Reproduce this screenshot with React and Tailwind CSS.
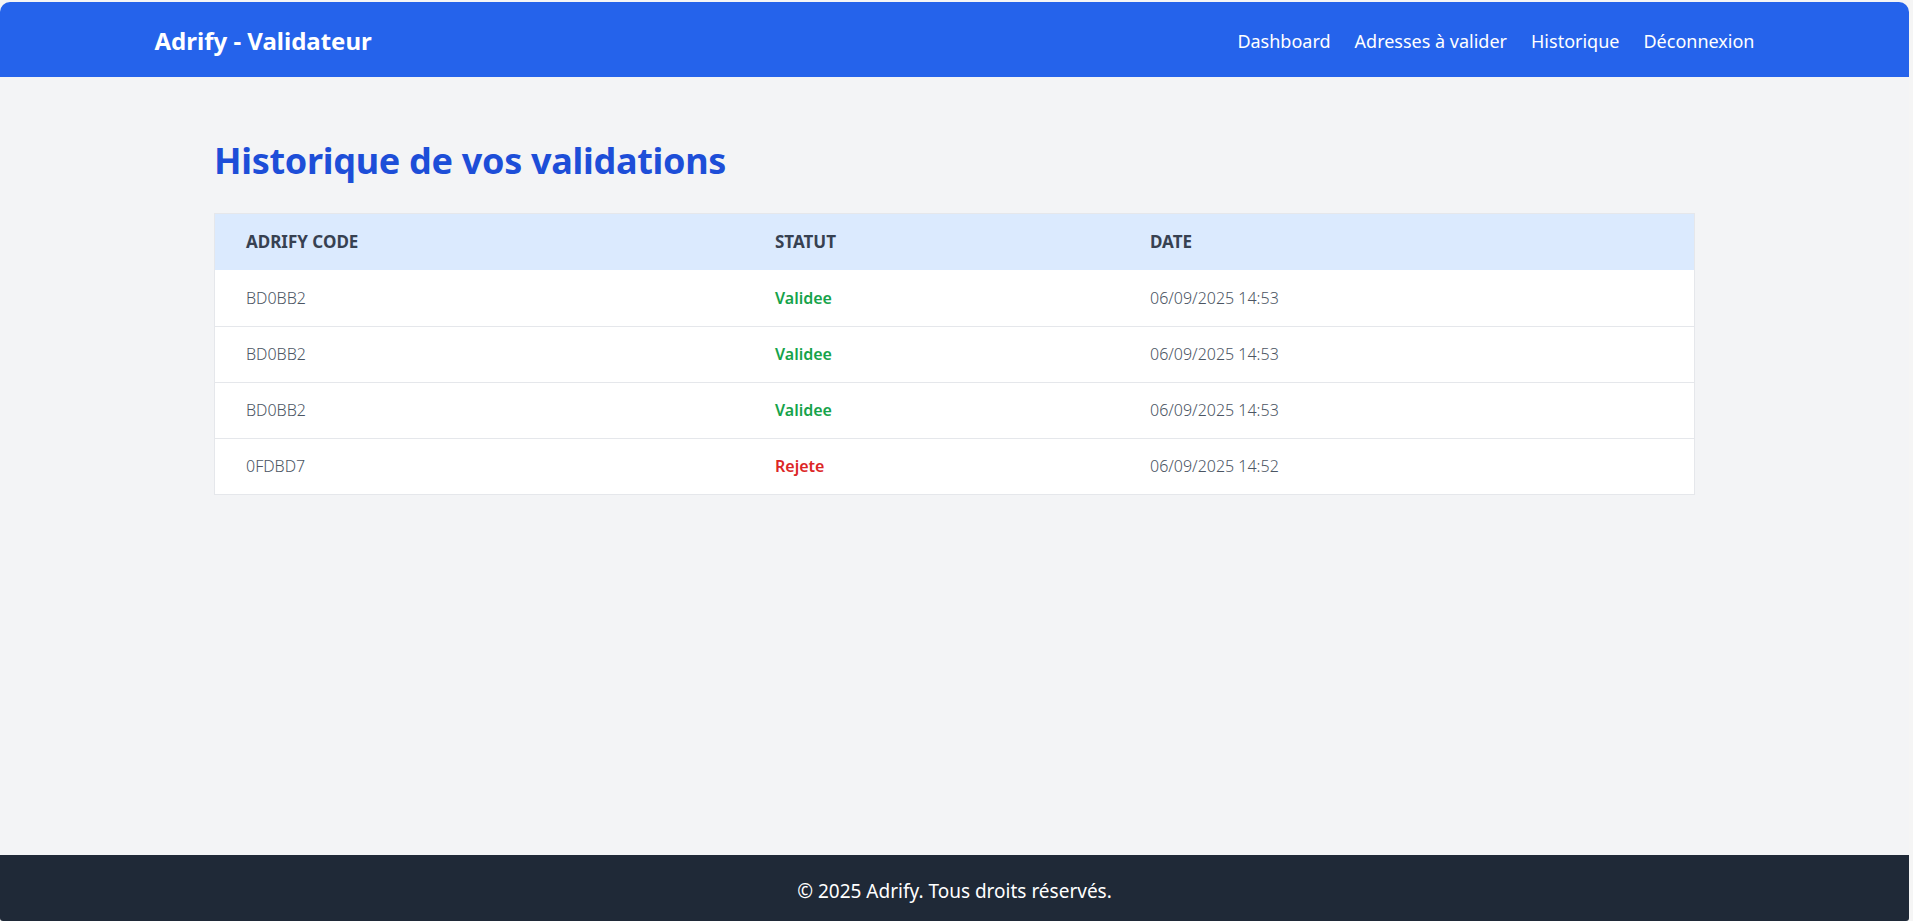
export default function App() {
  const rows = [
    { code: "BD0BB2", status: "Validee", ok: true, date: "06/09/2025 14:53" },
    { code: "BD0BB2", status: "Validee", ok: true, date: "06/09/2025 14:53" },
    { code: "BD0BB2", status: "Validee", ok: true, date: "06/09/2025 14:53" },
    { code: "0FDBD7", status: "Rejete", ok: false, date: "06/09/2025 14:52" },
  ];
  return (
    <div
      className="h-[921px] w-full bg-[#f5f5f5] pt-[2px] pr-[4px] overflow-hidden"
      style={{ fontFamily: '"Noto Sans", "Open Sans", sans-serif' }}
    >
      <div className="flex h-[919px] flex-col overflow-hidden rounded-t-[10px] rounded-b-[3px]">
        <header className="h-[75px] shrink-0 bg-[#2563eb] text-white">
          <div className="mx-auto flex h-full max-w-[1600px] items-center justify-between pt-[2px]">
            <div className="text-2xl font-bold">Adrify - Validateur</div>
            <nav className="flex items-center gap-6 text-lg">
              <a>Dashboard</a>
              <a>Adresses à valider</a>
              <a>Historique</a>
              <a>Déconnexion</a>
            </nav>
          </div>
        </header>
        <main className="flex-1 bg-[#f3f4f6]">
          <div className="mx-auto max-w-[1481px] pt-16">
            <h1 className="mb-8 h-10 text-4xl leading-10 font-bold tracking-[-0.3px] text-[#1d4ed8]">
              Historique de vos validations
            </h1>
            <div className="border border-[#e5e7eb] bg-white">
              <table className="w-full table-fixed border-collapse text-left">
                <thead>
                  <tr className="h-[56px] bg-[#dbeafe] text-[17px] font-bold uppercase text-[#374151]">
                    <th className="w-[529px] px-[31px] font-bold">Adrify Code</th>
                    <th className="w-[375px] px-[31px] font-bold">Statut</th>
                    <th className="px-[31px] font-bold">Date</th>
                  </tr>
                </thead>
                <tbody>
                  {rows.map((r, i) => (
                    <tr
                      key={i}
                      className={`h-[56px] text-base ${i < rows.length - 1 ? "border-b border-[#e5e7eb]" : ""}`}
                    >
                      <td className="px-[31px] font-light text-[#4b5563]">{r.code}</td>
                      <td
                        className={`px-[31px] font-semibold ${r.ok ? "text-[#16a34a]" : "text-[#dc2626]"}`}
                      >
                        {r.status}
                      </td>
                      <td className="px-[31px] font-light text-[#4b5563]">{r.date}</td>
                    </tr>
                  ))}
                </tbody>
              </table>
            </div>
          </div>
        </main>
        <footer className="flex h-[66px] shrink-0 items-center justify-center bg-[#1f2937] pt-[6px] text-[19px] text-white">
          © 2025 Adrify. Tous droits réservés.
        </footer>
      </div>
    </div>
  );
}
